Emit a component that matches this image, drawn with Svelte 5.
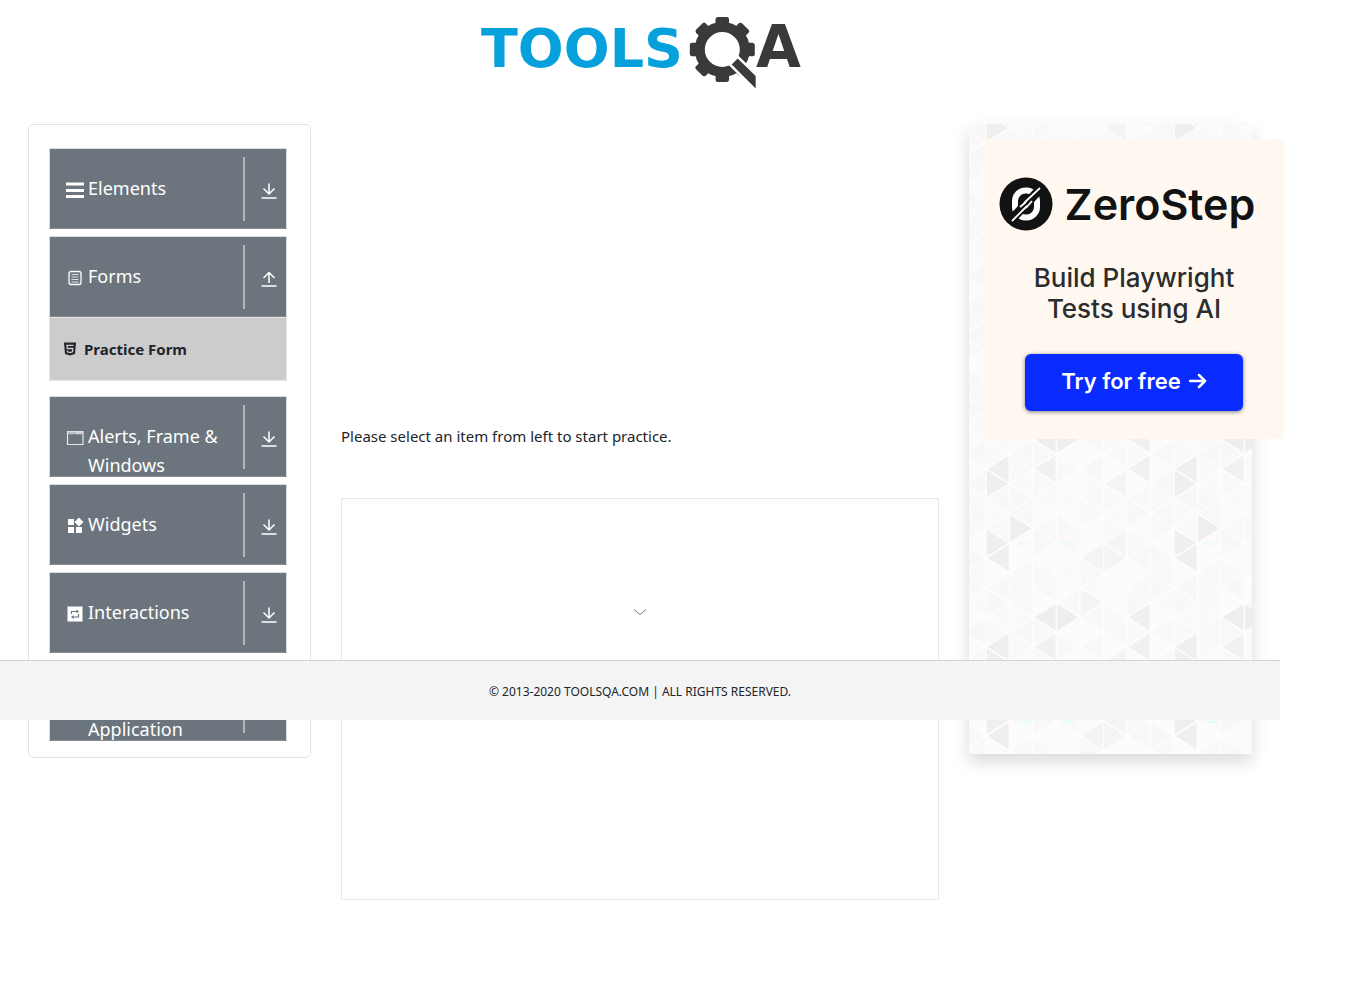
<script>
  const groups = [
    { name: 'Elements', icon: 'bars' },
    { name: 'Forms', icon: 'doc', items: ['Practice Form'] },
    { name: 'Alerts, Frame & Windows', icon: 'window' },
    { name: 'Widgets', icon: 'widgets' },
    { name: 'Interactions', icon: 'loop' },
    { name: 'Book Store Application', icon: 'book' }
  ];

  // Triangle mosaic: 8 strips wide, 12 half-steps high, repeated as a tile.
  const STRIP = 23.5;
  const STEP = 178 / 12;
  const shades = {
    '0L0': '#efefef', '0R1': '#efefef', '2L0': '#f1f1f1', '6L0': '#f1f1f1', '5L1': '#f4f4f4',
    '1R4': '#eeeeee', '0R5': '#efefef', '0L6': '#efefef', '4L6': '#f4f4f4', '5R6': '#f4f4f4',
    '4R9': '#f4f4f4', '2L10': '#eeeeee', '3R10': '#eeeeee', '6L10': '#f0f0f0', '5L5': '#f5f5f5'
  };
  const pale = ['#fbfbfb', '#f9f9f9', '#fafafa', '#f8f8f8', '#fcfcfc', '#f9f9f9', '#f8f8f8'];
  const triangles = [];
  for (let s = -1; s <= 8; s++) {
    for (let k = -1; k <= 13; k++) {
      const strip = (s + 8) % 8;
      const dir = (s + k) % 2 === 0 ? 'L' : 'R';
      const apexX = dir === 'L' ? s * STRIP : (s + 1) * STRIP;
      const baseX = dir === 'L' ? (s + 1) * STRIP : s * STRIP;
      const row = (k + 12) % 12;
      triangles.push({
        points: `${apexX},${k * STEP} ${baseX},${(k - 1) * STEP} ${baseX},${(k + 1) * STEP}`,
        fill: shades[`${strip}${dir}${row}`] ?? pale[(strip * 5 + row * 3 + ((strip * row) % 4)) % 7]
      });
    }
  }
</script>

<div class="page">
  <header>
    <a href="/" aria-label="ToolsQA home">
      <svg class="logo" viewBox="0 0 340 95" width="340" height="95">
        <text class="tools" x="11" y="62">TOOLS</text>
        <g fill="#3a3a3c">
          {#each [0, 45, 90, 135, 180, 225, 270, 315] as angle}
            <path d="M245.500 22V14Q246 12 248 12H257Q259 12 259 14V22Z" transform="rotate({angle} 252.3 44.5)" />
          {/each}
        </g>
        <circle cx="252.3" cy="44.5" r="22.5" fill="none" stroke="#3a3a3c" stroke-width="10" />
        <path d="M261.700 59.500L267.700 53.500L285.700 71V83.500Z" fill="#3a3a3c" stroke="#fff" stroke-width="5" />
        <path d="M261.700 59.500L267.700 53.500L285.700 71V83.500Z" fill="#3a3a3c" />
        <text class="qa" x="286" y="62">A</text>
      </svg>
    </a>
  </header>

  <div class="columns">
    <nav>
      {#each groups as group}
        <section>
          <button class="group">
            <svg class="icon" viewBox="0 0 18 18" width="18" height="18">
              {#if group.icon === 'bars'}
                <path d="M0 1.500H18V4.500H0ZM0 8H18V11H0ZM0 14H18V17H0Z" fill="#fff" />
              {:else if group.icon === 'doc'}
                <rect x="3" y="2.500" width="12" height="13" rx="2" fill="none" stroke="#fff" stroke-width="1.300" />
                <path d="M5.500 5.500H12.500M5.500 8H12.500M5.500 10.500H12.500M5.500 13H12.500" stroke="#fff" stroke-opacity="0.8" />
              {:else if group.icon === 'window'}
                <path d="M1.500 2.500H17V15.500H1.500Z" fill="none" stroke="#e4e6e8" stroke-width="1.200" />
                <path d="M1.500 4H17" stroke="#cfd2d5" stroke-width="2.500" />
                <path d="M3 4H4M5.500 4H6.500M8 4H9" stroke="#6c757d" />
              {:else if group.icon === 'widgets'}
                <path d="M2 2H8V8H2ZM2 10H8V16H2ZM10 10H16V16H10ZM13 .500L17.500 5L13 9.500L8.500 5Z" fill="#fff" />
              {:else if group.icon === 'loop'}
                <rect x="1.500" y="1.500" width="15" height="15" fill="#fff" />
                <path d="M5.500 9V6.500H11.500M6.500 12H12.500V9" fill="none" stroke="#6c757d" stroke-width="1.200" />
                <path d="M10.500 4.500L13 6.500L10.500 8.500ZM7.500 10L5 12L7.500 14Z" fill="#6c757d" />
              {:else}
                <path d="M3 2H15V16H3Z" fill="#fff" />
              {/if}
            </svg>
            <span class="name">{group.name}</span>
            <span class="toggle">
              <svg viewBox="0 0 16 18" width="16" height="18">
                {#if group.items}
                  <path d="M8 13V2.500M2.500 8L8 2.500L13.500 8M.500 16H15.500" />
                {:else}
                  <path d="M8 1.500V12M2.500 6.500L8 12L13.500 6.500M.500 16H15.500" />
                {/if}
              </svg>
            </span>
          </button>
          {#if group.items}
            <ul>
              {#each group.items as item}
                <li>
                  <a href="/automation-practice-form">
                    <svg viewBox="0 0 12 14" width="12" height="14">
                      <path d="M0 .500H12L11 12L6 13.500L1 12Z" fill="#212529" />
                      <path d="M9.500 3.300H3L3.300 6.500H8.800L8.500 9.800L6 10.600L3.500 9.800L3.400 8.500" fill="none" stroke="#ccc" stroke-width="1.300" />
                    </svg>
                    {item}
                  </a>
                </li>
              {/each}
            </ul>
          {/if}
        </section>
      {/each}
    </nav>

    <main>
      <p>Please select an item from left to start practice.</p>
      <div class="frame">
        <svg viewBox="0 0 14 8" width="14" height="8">
          <path d="M1 1.500L7 6.500L13 1.500" fill="none" stroke="#777" />
        </svg>
      </div>
    </main>

    <aside>
      <svg class="mosaic" width="100%" height="100%" aria-hidden="true">
        <defs>
          <pattern id="mosaic" x="17" y="167" width="188" height="178" patternUnits="userSpaceOnUse">
            {#each triangles as t}
              <polygon points={t.points} fill={t.fill} stroke="#fdfdfd" stroke-width="1.500" />
            {/each}
            <path d="M31 74H46L42 76H34ZM76 74H92L88 76H80Z" fill="#e4fdfd" />
          </pattern>
        </defs>
        <rect width="100%" height="100%" fill="url(#mosaic)" />
      </svg>
      <div class="ad">
        <div class="brand">
          <svg viewBox="0 0 54 54" width="54" height="54">
            <circle cx="27" cy="27" r="26.500" fill="#121212" />
            <rect x="16" y="13.500" width="22" height="27" rx="10.500" fill="none" stroke="#fff" stroke-width="6" />
            <path d="M10 45L44 9" stroke="#121212" stroke-width="9" />
            <path d="M13 44L28 29M25 26L41 11M21 30L27 25M27 31L33 24" stroke="#fff" stroke-width="1.800" />
          </svg>
          <strong>ZeroStep</strong>
        </div>
        <p>Build Playwright<br />Tests using AI</p>
        <a class="cta" href="/zerostep">
          Try for free
          <svg viewBox="0 0 18 16" width="18" height="16">
            <path d="M1 8H16M10 2L16 8L10 14" fill="none" stroke="#fff" stroke-width="2.500" stroke-linecap="round" stroke-linejoin="round" />
          </svg>
        </a>
      </div>
    </aside>
  </div>

  <footer>© 2013-2020 TOOLSQA.COM | ALL RIGHTS RESERVED.</footer>
</div>

<style>
  :global(body) {
    margin: 0;
    background: #fff;
  }
  .page {
    position: relative;
    margin-right: 82px;
    padding-bottom: 100px;
    font-family: 'Noto Sans', 'Open Sans', sans-serif;
    color: #212529;
  }
  .page :global(*) {
    box-sizing: border-box;
  }
  header {
    display: flex;
    justify-content: center;
    padding: 5px 0 24px;
  }
  .logo {
    display: block;
  }
  .tools,
  .qa {
    font: bold 54px 'DejaVu Sans', sans-serif;
    fill: #06a0dd;
  }
  .qa {
    font-size: 58px;
    fill: #3a3a3c;
  }
  .columns {
    display: grid;
    grid-template-columns: minmax(0, 283fr) minmax(0, 598fr) minmax(0, 283fr);
    gap: 30px;
    align-items: start;
    padding: 0 28px;
  }
  nav {
    display: flex;
    flex-direction: column;
    gap: 7px;
    padding: 23px 23px 16px 20px;
    border: 1px solid #e3e3e3;
    border-radius: 5px;
  }
  .group {
    display: flex;
    width: 100%;
    height: 81px;
    padding: 0 0 0 16px;
    border: 1px solid #dcdee0;
    border-bottom-color: #868e95;
    background: #6c757d;
    color: #fff;
    font: inherit;
    font-size: 18px;
    line-height: 29px;
    text-align: left;
    overflow: hidden;
  }
  .icon {
    flex: none;
    margin: 32px 4px 0 0;
  }
  .name {
    flex: 1;
    padding-top: 25px;
  }
  .toggle {
    display: flex;
    align-items: center;
    justify-content: center;
    width: 43px;
    height: 64px;
    margin-top: 8px;
    padding: 4px 0 0 6px;
    border-left: 2px solid #b5b5b5;
  }
  .toggle path {
    fill: none;
    stroke: #fff;
    stroke-width: 1.5;
  }
  ul {
    height: 64px;
    margin: 0 0 8px;
    padding: 0;
    border: 1px solid #e4e4e4;
    background: #ccc;
    list-style: none;
  }
  li a {
    display: flex;
    align-items: center;
    gap: 8px;
    height: 62px;
    padding-left: 14px;
    color: #212529;
    font-size: 15px;
    font-weight: 700;
    text-decoration: none;
  }
  main > p {
    margin: 300px 0 50px;
    font-size: 15px;
    line-height: 24px;
  }
  .frame {
    display: flex;
    justify-content: center;
    height: 402px;
    padding-top: 109px;
    border: 1px solid #e9e9e9;
  }
  aside {
    position: relative;
    height: 630px;
    padding: 15px;
    box-shadow: 0 8px 16px rgba(0, 0, 0, 0.15);
  }
  .mosaic {
    position: absolute;
    inset: 0;
  }
  .ad {
    position: relative;
    display: flex;
    flex-direction: column;
    align-items: center;
    width: 300px;
    height: 300px;
    padding-top: 38px;
    background: #fef8f1;
    font-family: Inter, sans-serif;
  }
  .brand {
    display: flex;
    align-items: center;
    gap: 12px;
    height: 54px;
    padding-right: 14px;
  }
  .brand strong {
    color: #121212;
    font-size: 43px;
    font-weight: 600;
  }
  .ad p {
    margin: 31px 0 30px;
    color: #2c2c2c;
    font-size: 26px;
    font-weight: 500;
    line-height: 31px;
    text-align: center;
  }
  .cta {
    display: flex;
    align-items: center;
    justify-content: center;
    gap: 8px;
    width: 218px;
    height: 57px;
    padding-bottom: 3px;
    border-radius: 6px;
    background: #0a2bff;
    box-shadow: 0 1px 4px rgba(0, 0, 0, 0.5);
    color: #fff;
    font-size: 22px;
    font-weight: 600;
    text-decoration: none;
  }
  footer {
    position: absolute;
    top: 660px;
    left: 0;
    right: 0;
    height: 60px;
    border-top: 1px solid #d6d6d6;
    background: #f4f4f4;
    font-size: 12px;
    line-height: 62px;
    text-align: center;
  }
</style>
